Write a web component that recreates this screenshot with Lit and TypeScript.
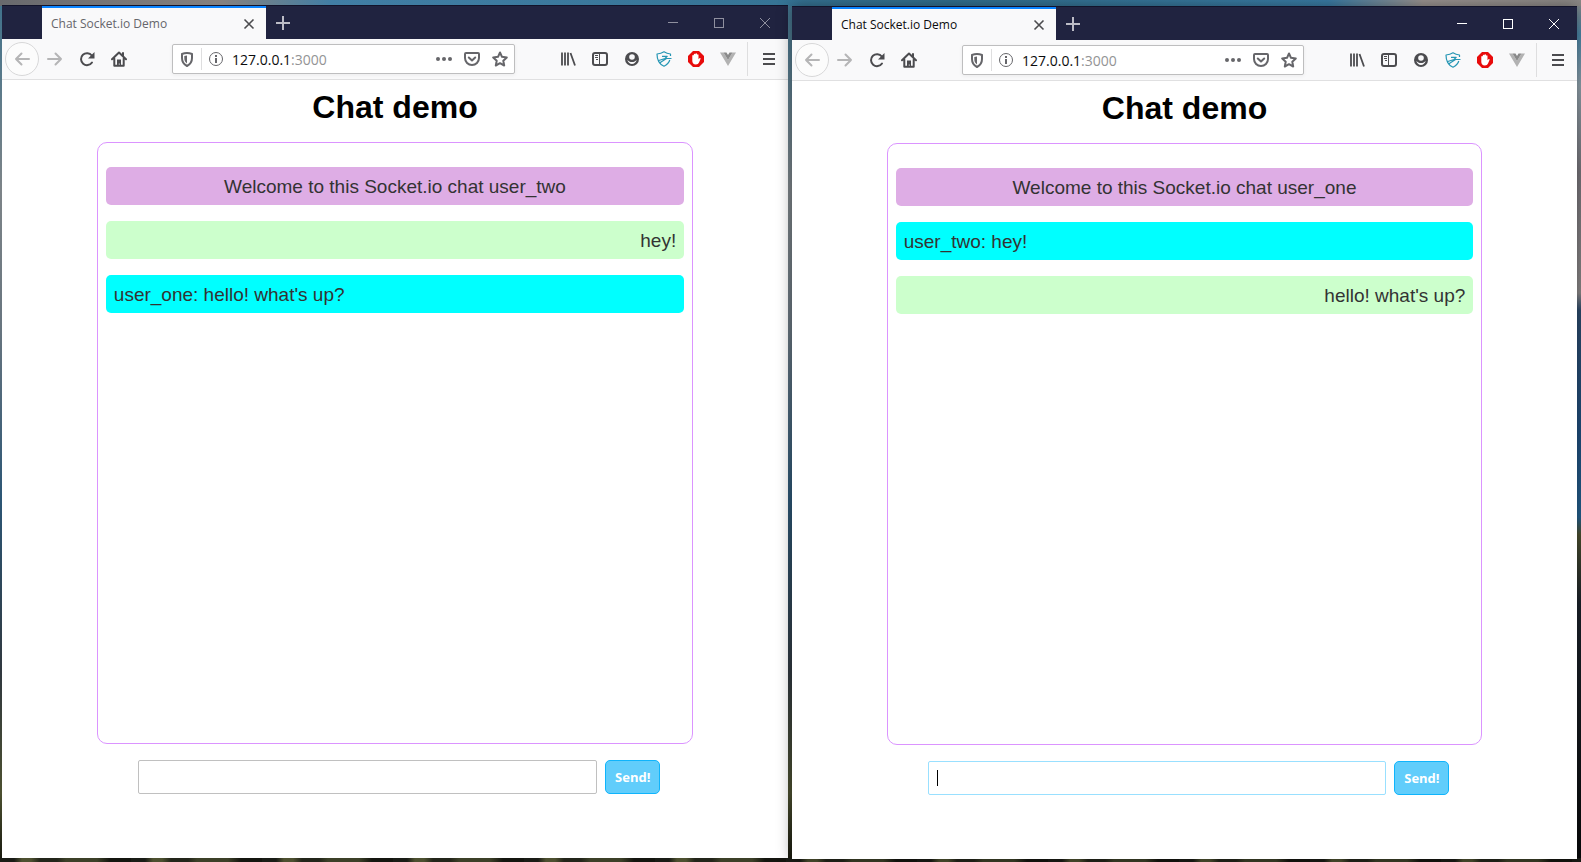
import { LitElement, html, svg, css } from "lit";
import { customElement, property } from "lit/decorators.js";

type Kind = "notice" | "mine" | "other";
interface Message {
  kind: Kind;
  text: string;
}

const icons = {
  back: svg`<path d="M15 8H2M7.500 2.500 2 8l5.500 5.500" fill="none" stroke="currentColor" stroke-width="2" stroke-linecap="round" stroke-linejoin="round"/>`,
  forward: svg`<path d="M1 8h13M8.500 2.500 14 8l-5.500 5.500" fill="none" stroke="currentColor" stroke-width="2" stroke-linecap="round" stroke-linejoin="round"/>`,
  reload: svg`<path d="M13 11.500A6 6 0 1 1 12.800 4.500" fill="none" stroke="currentColor" stroke-width="2" stroke-linecap="round"/><path d="M15.500 1v6.500H9z" fill="currentColor"/>`,
  home: svg`<path d="M1 8.300 8 1.500l7 6.800M3.300 7.500V14.800h9.400V7.500M12 2v3" fill="none" stroke="currentColor" stroke-width="2" stroke-linecap="round" stroke-linejoin="round"/><path d="M6 15V8.500h4V15H8.600v-2.500H7.800V15z" fill="currentColor"/>`,
  guard: svg`<path d="M8 2c2 0 3.800.5 5 1v4c0 4-2 6.500-5 8-3-1.500-5-4-5-8V3c1.200-.5 3-1 5-1z" fill="none" stroke="currentColor" stroke-width="2" stroke-linejoin="round"/><path d="M8 4.500v8C6 11 5.300 9.500 5.300 7V5c.8-.3 1.700-.5 2.700-.5z" fill="currentColor"/>`,
  info: svg`<circle cx="8" cy="8" r="6.500" fill="none" stroke="currentColor"/><path d="M7 7h2v5H7zM7 4h2v2H7z" fill="currentColor"/>`,
  dots: svg`<circle cx="2" cy="8" r="2" fill="currentColor"/><circle cx="8" cy="8" r="2" fill="currentColor"/><circle cx="14" cy="8" r="2" fill="currentColor"/>`,
  pocket: svg`<path d="M2 2h12a1 1 0 0 1 1 1v4a7 7 0 0 1-14 0V3a1 1 0 0 1 1-1z" fill="none" stroke="currentColor" stroke-width="2"/><path d="m4.800 6.500 3.200 3 3.200-3" fill="none" stroke="currentColor" stroke-width="2" stroke-linecap="round" stroke-linejoin="round"/>`,
  star: svg`<path d="m8 1.500 2 4.300 4.800.6-3.500 3.300.9 4.800L8 12.200l-4.200 2.300.9-4.800L1.200 6.400 6 5.800z" fill="none" stroke="currentColor" stroke-width="2" stroke-linejoin="round"/>`,
  library: svg`<path d="M2 1.500v13M5 1.500v13M8 1.500v13M10.500 2 15 14.500" fill="none" stroke="currentColor" stroke-width="1.800"/>`,
  sidebar: svg`<rect x="1" y="2" width="14" height="12" rx="2" fill="none" stroke="currentColor" stroke-width="2"/><path d="M7.500 2v12M3 4.500h3M3 6.500h3M4 8.500h2" fill="none" stroke="currentColor"/>`,
  account: svg`<circle cx="8" cy="8" r="7" fill="currentColor"/><circle cx="8" cy="6" r="2.800" fill="#f9f9fa"/><path d="M3.300 8.800c.6 2.700 2.400 4.200 4.700 4.200s4.100-1.500 4.700-4.200c-1.200 1.600-2.700 2.300-4.700 2.300s-3.500-.7-4.700-2.300z" fill="#f9f9fa"/>`,
  privacy: svg`<g fill="none" stroke="#2596b4" stroke-width="1.200" stroke-linejoin="round"><path d="M14.500 5V3C12 2.800 9.800 2 8 .8 6.200 2 4 2.800 1 3c0 5.500 1 9.700 7 12.200 3-1.400 5-3.600 5.800-6.200"/><path d="M15.500 7.500h-5L3.500 12M6 5.300h5.200L9 7.500 2 9.800"/></g>`,
  block: svg`<path d="M5 0h6l5 5v6l-5 5H5l-5-5V5z" fill="#e80b0b"/><path d="M4.300 8V4.800a.75.75 0 0 1 1.500 0V3.500a.75.75 0 0 1 1.600 0v-.4a.75.75 0 0 1 1.600 0v.9a.75.75 0 0 1 1.500 0V8.300l1-1.100c.6-.5 1.300 0 1 .7L11 11.500c-.6 1.200-1.500 1.900-3.100 1.900-2.400 0-3.600-1.600-3.600-3.500z" fill="#fff"/>`,
  vue: svg`<path d="M0 1.500h3.500L8 9l4.500-7.500H16L8 15z" fill="#b2b2b2"/><path d="M3.500 1.500h3L8 4l1.500-2.500h3L8 9z" fill="#8a8a8a"/>`,
  menu: svg`<path d="M2 3h12M2 8h12M2 13h12" stroke="currentColor" stroke-width="2"/>`,
  close: svg`<path d="m3.500 3.500 9 9m0-9-9 9" stroke="currentColor" stroke-width="1.600"/>`,
  plus: svg`<path d="M8 1v14M1 8h14" stroke="currentColor" stroke-width="2"/>`,
  minimize: svg`<path d="M3 7.500h10" stroke="currentColor"/>`,
  maximize: svg`<rect x="3.500" y="3.500" width="9" height="9" fill="none" stroke="currentColor"/>`,
  exit: svg`<path d="m3 3 10 10m0-10L3 13" stroke="currentColor"/>`,
};
type IconName = keyof typeof icons;

const icon = (name: IconName) =>
  html`<svg class="icon" viewBox="0 0 16 16" width="16" height="16" aria-hidden="true">${icons[name]}</svg>`;

const button = (name: IconName, label: string, cls = "tool") =>
  html`<button type="button" class=${cls} aria-label=${label}>${icon(name)}</button>`;

@customElement("chat-page")
export class ChatPage extends LitElement {
  @property({ attribute: false }) messages: Message[] = [];
  @property({ type: Boolean }) focused = false;

  static styles = css`
    :host {
      display: flex;
      flex-direction: column;
      align-items: center;
      min-height: 0;
      background: #fff;
      font-family: "Liberation Sans", Arial, sans-serif;
    }
    h1 {
      margin: 9px 0 16px;
      font-size: 32px;
      line-height: 37px;
      color: #000;
    }
    .log {
      box-sizing: border-box;
      width: calc(76% - 1px);
      height: 602px;
      flex: 0 1 auto;
      padding: 24px 8px 8px;
      border: 1px solid #db94ff;
      border-radius: 10px;
      margin: 0;
      list-style: none;
      display: flex;
      flex-direction: column;
      gap: 16px;
      overflow: auto;
    }
    .message {
      padding: 9px 8px 7px;
      border-radius: 5px;
      font-size: 19px;
      line-height: 22px;
      color: #333;
    }
    .notice { background: #deade5; text-align: center; }
    .mine { background: #ccffcc; text-align: right; }
    .other { background: #00ffff; }
    form {
      display: flex;
      gap: 8px;
      box-sizing: border-box;
      width: 68%;
      padding: 0 2px 0 10px;
      margin-top: 16px;
    }
    .entry {
      flex: 1;
      min-width: 0;
      box-sizing: border-box;
      height: 34px;
      padding: 8px;
      border: 1px solid #c0c0c0;
      border-radius: 2px;
      outline: none;
      font-family: inherit;
      font-size: 14px;
      background: #fff;
    }
    .entry:focus { border-color: #99e0ff; }
    .entry:focus:placeholder-shown {
      caret-color: transparent;
      background: linear-gradient(#000, #000) 8px center / 1px 16px no-repeat #fff;
    }
    .send {
      box-sizing: border-box;
      width: 55px;
      height: 34px;
      padding: 0;
      border: 1px solid #0fb4fc;
      border-radius: 5px;
      background: #61cdfb;
      color: #fff;
      font-family: "Open Sans", sans-serif;
      font-size: 13px;
      font-weight: 700;
    }
  `;

  firstUpdated() {
    if (this.focused) this.renderRoot.querySelector("input")?.focus();
  }

  render() {
    return html`
      <h1>Chat demo</h1>
      <ul class="log">
        ${this.messages.map((m) => html`<li class="message ${m.kind}">${m.text}</li>`)}
      </ul>
      <form @submit=${(e: Event) => e.preventDefault()}>
        <input class="entry" type="text" aria-label="Message" placeholder=" " autocomplete="off" />
        <button class="send" type="submit">Send!</button>
      </form>
    `;
  }
}

@customElement("browser-window")
export class BrowserWindow extends LitElement {
  @property({ attribute: false }) messages: Message[] = [];
  @property({ type: Boolean, reflect: true }) active = false;

  static styles = css`
    :host {
      display: grid;
      grid-template-rows: 34px 41px minmax(0, 1fr);
      min-width: 0;
      font-family: "Open Sans", sans-serif;
      background: #fff;
    }
    :host([active]) { box-shadow: 0 0 14px rgba(0, 0, 0, 0.4); }
    button {
      display: flex;
      align-items: center;
      justify-content: center;
      padding: 0;
      border: 0;
      background: none;
      color: inherit;
    }
    .icon { display: block; }
    .titlebar {
      display: flex;
      box-sizing: border-box;
      padding-left: 40px;
      border-top: 1px solid #12132b;
      background: #202340;
      color: #bcbcc6;
    }
    .tab {
      display: flex;
      align-items: center;
      box-sizing: border-box;
      width: 224px;
      padding: 0 9px;
      border-top: 2px solid #0a84ff;
      background: #f9f9fa;
      color: #66666b;
      font-size: 12px;
    }
    :host([active]) .tab { color: #0c0c0d; }
    .title { flex: 1; white-space: nowrap; }
    .tab-close { color: #4c4c4f; }
    .new-tab { width: 34px; }
    .controls { display: flex; margin-left: auto; color: #8f909f; }
    :host([active]) .controls { color: #fff; }
    .control { width: 46px; }
    .toolbar {
      display: flex;
      align-items: center;
      box-sizing: border-box;
      padding: 0 3px;
      border-bottom: 1px solid #e0e0e1;
      background: #f9f9fa;
      color: #4c4c4f;
    }
    .tool { width: 32px; height: 32px; flex: none; }
    .back {
      box-sizing: border-box;
      width: 34px;
      height: 34px;
      border: 1px solid #d8d8d9;
      border-radius: 50%;
      background: #fcfcfc;
      color: #b5b5b6;
    }
    .forward { width: 32px; height: 32px; color: #b5b5b6; }
    .url {
      display: flex;
      align-items: center;
      box-sizing: border-box;
      flex: 1;
      min-width: 0;
      height: 30px;
      margin: 0 37px;
      border: 1px solid #bebebf;
      border-radius: 2px;
      background: #fff;
      box-shadow: 0 1px 4px rgba(0, 0, 0, 0.06);
      color: #66666a;
    }
    .url-tool { width: 28px; height: 28px; flex: none; }
    .identity { width: 29px; height: 22px; border-right: 1px solid #dededf; }
    .address {
      flex: 1;
      min-width: 0;
      padding-left: 2px;
      font-size: 14px;
      white-space: nowrap;
      color: #939395;
    }
    .host { color: #0c0c0d; }
    .app-menu { margin-left: 3px; padding-left: 5px; width: 38px; height: 34px; border-left: 1px solid #dededf; }
  `;

  render() {
    return html`
      <header class="titlebar">
        <div class="tab">
          <span class="title">Chat Socket.io Demo</span>
          ${button("close", "Close tab", "tab-close")}
        </div>
        ${button("plus", "New tab", "new-tab")}
        <div class="controls">
          ${button("minimize", "Minimize", "control")}
          ${button("maximize", "Maximize", "control")}
          ${button("exit", "Close window", "control")}
        </div>
      </header>
      <nav class="toolbar">
        ${button("back", "Back", "back")}
        ${button("forward", "Forward", "forward")}
        ${button("reload", "Reload")}
        ${button("home", "Home")}
        <div class="url">
          ${button("guard", "Tracking protection", "url-tool identity")}
          ${button("info", "Site information", "url-tool")}
          <span class="address"><span class="host">127.0.0.1</span>:3000</span>
          ${button("dots", "Page actions", "url-tool")}
          ${button("pocket", "Save to Pocket", "url-tool")}
          ${button("star", "Bookmark", "url-tool")}
        </div>
        ${button("library", "Library")}
        ${button("sidebar", "Sidebars")}
        ${button("account", "Account")}
        ${button("privacy", "Privacy extension")}
        ${button("block", "Ad blocker")}
        ${button("vue", "Vue devtools")}
        ${button("menu", "Menu", "app-menu")}
      </nav>
      <chat-page .messages=${this.messages} ?focused=${this.active}></chat-page>
    `;
  }
}

@customElement("app-root")
export class AppRoot extends LitElement {
  static styles = css`
    :host {
      display: grid;
      grid-template-columns: repeat(2, minmax(0, 1fr));
      gap: 4px;
      box-sizing: border-box;
      height: 100vh;
      padding: 5px 3px 3px 2px;
      background:
        repeating-linear-gradient(90deg, #1a1c16 0 14px, #4d5030 22px 31px, #23251a 40px 57px, #3c4028 66px 97px, #14150f 110px 131px) bottom / 100% 4px no-repeat,
        linear-gradient(90deg, #68696d, #85817f 14%, #417ea5 21%, #32708f 60%, #3a7ca5 84%, #9b9491 90%, #8c8987) top / 100% 6px no-repeat,
        linear-gradient(#8c8987, #4a86a8 4%, #8fa0aa 10%, #77747a 20%, #8a8787 34%, #2c4a6b 36%, #1f4d7c 50%, #245f8c 60%, #4c5030 62%, #1b222b 70%, #14181c 85%, #08090a) right / 4px 100% no-repeat,
        linear-gradient(#3f728c, #7d8488 22%, #68757f 38%, #2c5675 58%, #30383f 78%, #4c5030 92%, #17180e);
    }
    .first { margin-bottom: 1px; }
    .second { margin: 1px 1px 0 0; }
  `;

  render() {
    return html`
      <browser-window
        class="first"
        .messages=${[
          { kind: "notice", text: "Welcome to this Socket.io chat user_two" },
          { kind: "mine", text: "hey!" },
          { kind: "other", text: "user_one: hello! what's up?" },
        ] as Message[]}
      ></browser-window>
      <browser-window
        class="second"
        active
        .messages=${[
          { kind: "notice", text: "Welcome to this Socket.io chat user_one" },
          { kind: "other", text: "user_two: hey!" },
          { kind: "mine", text: "hello! what's up?" },
        ] as Message[]}
      ></browser-window>
    `;
  }
}
